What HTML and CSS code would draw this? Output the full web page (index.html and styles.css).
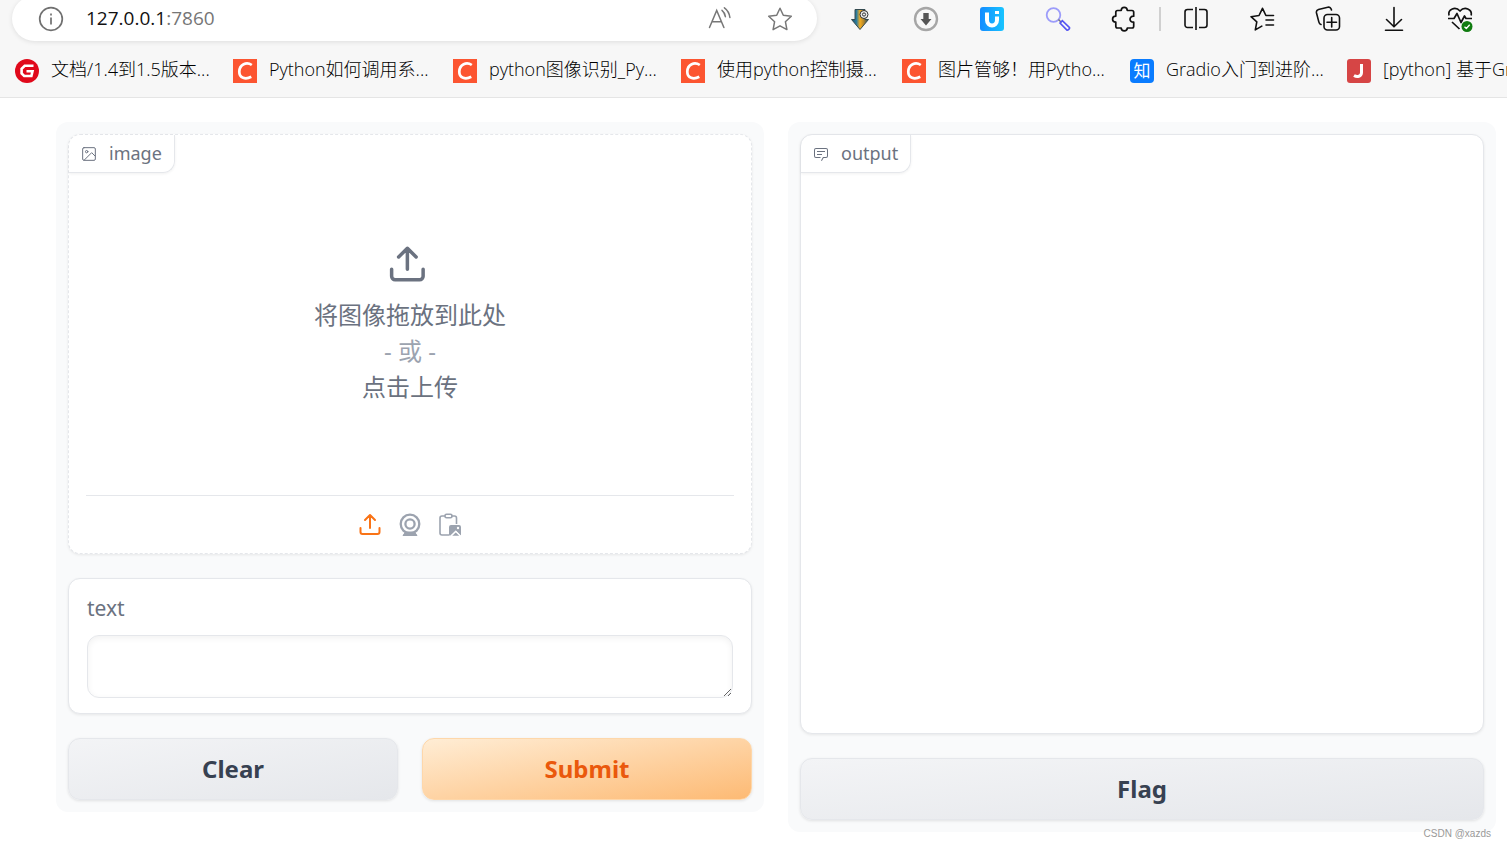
FILE: index.html
```html
<!DOCTYPE html>
<html lang="zh-CN">
<head>
<meta charset="UTF-8">
<meta name="viewport" content="width=device-width, initial-scale=1.0">
<title>Gradio</title>
<link rel="stylesheet" href="styles.css">
</head>
<body>
    <header class="browser">
        <div class="toolbar">
            <div class="address">
                <button class="icon-btn" aria-label="Site info">
                    <svg width="26" height="26" viewBox="0 0 26 26" fill="none" stroke="#707070" stroke-width="1.7"><circle cx="13" cy="13" r="11.3"/><path d="M13 11.5v7"/><path d="M13 7.4v2"/></svg>
                </button>
                <div class="url">127.0.0.1<span>:7860</span></div>
                <button class="icon-btn" aria-label="Read aloud">
                    <svg width="26" height="26" viewBox="0 0 26 26" fill="none" stroke="#777" stroke-width="1.5" stroke-linecap="round"><path d="M2.5 21.5L9.7 4.5l7.2 17M5 15.8h9.4"/><path d="M15 4.3c1.9 1.5 3 3.7 3.4 6.4M17.4 1.8c3 2.2 5 5.400 5.500 9.700"/></svg>
                </button>
                <button class="icon-btn star" aria-label="Add to favorites">
                    <svg width="26" height="26" viewBox="0 0 26 26" fill="none" stroke="#777" stroke-width="1.5" stroke-linejoin="round"><path d="M13 2.200l3.300 7 8 1-5.900 5.500 1.500 7.900-6.900-3.800-6.900 3.800 1.500-7.900-5.900-5.500 8-1z"/></svg>
                </button>
            </div>
            <div class="tools">
                <button class="tool" aria-label="Downloader">
                    <svg width="24" height="24" viewBox="0 0 24 24">
                        <defs><linearGradient id="dl"><stop offset="0" stop-color="#174b68"/><stop offset=".3" stop-color="#2f7f9e"/><stop offset=".5" stop-color="#f5ad20"/><stop offset=".7" stop-color="#b98a2a"/><stop offset="1" stop-color="#174b68"/></linearGradient></defs>
                        <path d="M7 2.500h10v10h3.500L12 22.500 3.500 12.500H7z" fill="url(#dl)" stroke="#354b50"/>
                        <circle cx="16" cy="7.500" r="4" fill="#eee" stroke="#333"/><circle cx="16" cy="7.500" r="1.600" fill="none" stroke="#333"/>
                    </svg>
                </button>
                <button class="tool" aria-label="Download manager">
                    <svg width="26" height="26" viewBox="0 0 26 26"><circle cx="13" cy="13" r="11" fill="none" stroke="#a6a6a6" stroke-width="2.400"/><path d="M10.300 7h5.400v6h2.800L13 19.500 7.500 13h2.800z" fill="#555"/></svg>
                </button>
                <button class="tool" aria-label="Ui">
                    <svg width="24" height="24" viewBox="0 0 24 24">
                        <defs><linearGradient id="ui" x1="0" x2="1"><stop offset="0" stop-color="#148cff"/><stop offset="1" stop-color="#18c4ff"/></linearGradient></defs>
                        <rect width="24" height="24" rx="3" fill="url(#ui)"/><path d="M7 5.500v7.500c0 7.300 10 7.300 10 0V9.500" fill="none" stroke="#fff" stroke-width="4"/><path d="M15 5.500h4" stroke="#fff" stroke-width="3"/>
                    </svg>
                </button>
                <button class="tool" aria-label="Search">
                    <svg width="26" height="26" viewBox="0 0 26 26" fill="none"><circle cx="8.500" cy="9" r="6.800" stroke="#9c9cfa" stroke-width="1.800"/><path d="M13.500 13.500l3 3" stroke="#777" stroke-width="1.500"/><path d="M15 17l2.300-2.300 7 6.600c1 1-1.600 3.600-2.600 2.600z" stroke="#5555f2" stroke-width="1.600"/></svg>
                </button>
                <button class="tool" aria-label="Extensions">
                    <svg width="26" height="26" viewBox="0 0 26 26" fill="none" stroke="#111" stroke-width="1.700" stroke-linejoin="round"><path d="M6.500 4.500h3.700c.2-4.200 5.900-4.200 6.100 0h4.700c1 0 1.700.7 1.700 1.700v4c-4.900-.3-4.900 6.300 0 6v4.100c0 1-.7 1.700-1.700 1.700h-4.700c-.2 3.900-5.900 3.900-6.100 0H6.500c-1 0-1.700-.7-1.700-1.700v-4.100c-4.300-.2-4.300-5.800 0-6V6.200c0-1 .7-1.700 1.700-1.700z"/></svg>
                </button>
                <span class="separator"></span>
                <button class="tool" aria-label="Split screen">
                    <svg width="26" height="26" viewBox="0 0 26 26" fill="none" stroke="#111" stroke-width="1.600"><path d="M10 3.500H4.500a2.500 2.500 0 0 0-2.500 2.500v13a2.500 2.500 0 0 0 2.500 2.500H10M16 3.500h5.500A2.500 2.500 0 0 1 24 6v13a2.500 2.500 0 0 1-2.500 2.500H16M13 1v23"/></svg>
                </button>
                <button class="tool" aria-label="Favorites">
                    <svg width="26" height="26" viewBox="0 0 26 26" fill="none" stroke="#111" stroke-width="1.600" stroke-linejoin="round" stroke-linecap="round"><path d="M24.500 9.500h-7.600L13.500 2.300 10 9.500l-8 1.200 5.800 5.200-1.500 8 6.500-3.800M17 14h7.500M17 19h7.500"/></svg>
                </button>
                <button class="tool" aria-label="Collections">
                    <svg width="26" height="26" viewBox="0 0 26 26" fill="none" stroke="#111" stroke-width="1.600" stroke-linecap="round"><rect x="9" y="8.500" width="15.500" height="15.500" rx="3.500"/><path d="M16.700 11.500v9.500M12 16.300h9.500M6 18.500c-1.300-.4-1.800-1.200-2.100-2.400L1.500 7c-.4-1.700.4-3 2-3.500l9.300-2.300c1.700-.4 3.200.6 3.700 2.800"/></svg>
                </button>
                <button class="tool" aria-label="Downloads">
                    <svg width="26" height="26" viewBox="0 0 26 26" fill="none" stroke="#111" stroke-width="1.600" stroke-linecap="round" stroke-linejoin="round"><path d="M13 1.500v19M5.500 13.500l7.500 7.300 7.500-7.300M4.500 24.300h17"/></svg>
                </button>
                <button class="tool" aria-label="Browser essentials">
                    <svg width="28" height="28" viewBox="0 0 28 28" fill="none" stroke="#111" stroke-width="1.700" stroke-linejoin="round"><path d="M3 10.500C1.500 4 9.500 1 14 6c4.500-5 12.500-2 11.200 4.500M2 13.500h6l3-5 4 9 3.500-6.500 1.500 2.500h6M6 17l7.500 7"/><circle cx="21" cy="21.500" r="5.500" fill="#107c10" stroke="none"/><path d="M18.500 21.700l1.800 1.800 3.400-3.700" stroke="#fff" stroke-width="1.300"/></svg>
                </button>
            </div>
        </div>
        <nav class="bookmarks">
            <a href="#">
                <svg width="24" height="24" viewBox="0 0 24 24"><circle cx="12" cy="12" r="12" fill="#e0091b"/><path d="M18.500 6.800H9.700L6.600 9.900v4.500l2.600 2.600h7.200l1.100-4.800h-6" fill="none" stroke="#fff" stroke-width="2.600"/></svg>
                <span>文档/1.4到1.5版本...</span>
            </a>
            <a href="#"><svg class="csdn"><use href="#csdn"/></svg><span>Python如何调用系...</span></a>
            <a href="#"><svg class="csdn"><use href="#csdn"/></svg><span>python图像识别_Py...</span></a>
            <a href="#"><svg class="csdn"><use href="#csdn"/></svg><span>使用python控制摄...</span></a>
            <a href="#"><svg class="csdn"><use href="#csdn"/></svg><span>图片管够！用Pytho...</span></a>
            <a href="#"><b class="favicon zhihu">知</b><span>Gradio入门到进阶...</span></a>
            <a href="#">
                <svg width="24" height="24" viewBox="0 0 24 24"><rect width="24" height="24" rx="3" fill="#d64545"/><path d="M14.500 5v8.500c0 4.200-4.500 4.800-7.500 3" fill="none" stroke="#fff" stroke-width="3"/></svg>
                <span>[python] 基于Gr</span>
            </a>
        </nav>
    </header>

    <main class="app">
        <section class="panel">
            <div class="block image-block">
                <div class="block-label">
                    <svg width="16" height="16" viewBox="0 0 24 24" fill="none" stroke="currentColor" stroke-width="1.500" stroke-linecap="round" stroke-linejoin="round"><rect x="2.500" y="2.500" width="19" height="19" rx="2"/><circle cx="8.500" cy="8.500" r="1.800"/><path d="M21 15l-5-5L5 21"/></svg>
                    <span>image</span>
                </div>
                <button class="dropzone">
                    <svg width="48" height="42" viewBox="0 0 27 24" fill="none" stroke="currentColor" stroke-width="2" stroke-linecap="round" stroke-linejoin="round"><path d="M21 15v4a2 2 0 0 1-2 2H5a2 2 0 0 1-2-2v-4M17 8l-5-5-5 5M12 3v12"/></svg>
                    <span>将图像拖放到此处</span>
                    <span class="or">- 或 -</span>
                    <span>点击上传</span>
                </button>
                <div class="sources">
                    <button class="source active" aria-label="Upload">
                        <svg width="24" height="24" viewBox="0 0 24 24" fill="none" stroke="currentColor" stroke-width="2" stroke-linecap="round" stroke-linejoin="round"><path d="M21.500 15v4a2 2 0 0 1-2 2h-15a2 2 0 0 1-2-2v-4M17 7l-5-5-5 5M12 2v13"/></svg>
                    </button>
                    <button class="source" aria-label="Webcam">
                        <svg width="24" height="24" viewBox="0 0 24 24" fill="none" stroke="currentColor" stroke-width="2.300"><circle cx="12" cy="11" r="9.300"/><circle cx="12" cy="11" r="4.600"/><path d="M5 22.500h14l-2.500-3.500h-9z" fill="currentColor" stroke-width="1"/></svg>
                    </button>
                    <button class="source" aria-label="Paste">
                        <svg width="24" height="24" viewBox="0 0 24 24" fill="none" stroke="currentColor" stroke-width="1.600"><path d="M7 3H4a2 2 0 0 0-2 2v15a2 2 0 0 0 2 2h7M13 3h3.500a2 2 0 0 1 2 2v6"/><rect x="7" y="1.200" width="7" height="3.500" rx="1.500"/><path d="M13 12h8a2 2 0 0 1 2 2v9l-5.200-5.600L12 23l-1-1v-8a2 2 0 0 1 2-2z" fill="currentColor" stroke="none"/><path d="M12.500 23.500l5.300-5 5.200 5z" fill="currentColor" stroke="#fff" stroke-width="1.300"/><circle cx="20" cy="15" r="1.200" fill="#fff" stroke="none"/></svg>
                    </button>
                </div>
            </div>
            <div class="block text-block">
                <label for="text">text</label>
                <textarea id="text" rows="1"></textarea>
            </div>
            <div class="actions">
                <button class="btn">Clear</button>
                <button class="btn primary">Submit</button>
            </div>
        </section>
        <section class="panel">
            <div class="block output-block">
                <div class="block-label">
                    <svg width="16" height="16" viewBox="0 0 32 32" fill="currentColor"><path d="M17.740 30 16 29l4-7h6a2 2 0 0 0 2-2V8a2 2 0 0 0-2-2H6a2 2 0 0 0-2 2v12a2 2 0 0 0 2 2h9v2H6a4 4 0 0 1-4-4V8a4 4 0 0 1 4-4h20a4 4 0 0 1 4 4v12a4 4 0 0 1-4 4h-4.840Z"/><path d="M8 10h16v2H8zM8 16h10v2H8z"/></svg>
                    <span>output</span>
                </div>
            </div>
            <button class="btn">Flag</button>
        </section>
    </main>
    <div class="watermark">CSDN @xazds</div>

    <svg class="symbols" aria-hidden="true">
        <symbol id="csdn" viewBox="0 0 24 24"><path d="M0 0h24v24H0z" fill="#fc5531"/><path d="M18.800 6C13.500 2.300 6.500 5.300 6.300 12.500c-.2 6.800 6.300 8.300 12 5.300" fill="none" stroke="#fff" stroke-width="2.700"/></symbol>
    </svg>
</body>
</html>
```
FILE: styles.css
```css
* {
    box-sizing: border-box;
}
body {
    margin: 0;
    min-height: 100vh;
    position: relative;
    overflow: hidden;
    background-color: #fff;
    font-family: "Noto Sans", "Noto Sans CJK SC", sans-serif;
}
button {
    border: none;
    padding: 0;
    background: none;
    font-family: inherit;
    cursor: pointer;
}
svg {
    display: block;
    flex-shrink: 0;
}
.symbols {
    display: none;
}

/* browser bar */
.browser {
    height: 98px;
    background-color: #f7f7f7;
    border-bottom: 1px solid #e5e5e5;
    overflow: hidden;
    font-family: "Open Sans", "Noto Sans CJK SC", sans-serif;
}
.toolbar {
    display: flex;
    gap: 10px;
    height: 45px;
    margin-top: -4px;
    padding: 0 14px 0 12px;
}
.address {
    flex: 1;
    display: flex;
    align-items: center;
    height: 45px;
    padding: 0 24px 0 26px;
    border-radius: 23px;
    background-color: #fff;
    box-shadow: 0 1px 5px rgba(0, 0, 0, 0.1);
}
.url {
    flex: 1;
    margin-left: 22px;
    padding-bottom: 2px;
    font-size: 19px;
    color: #111;
}
.url span {
    color: #767676;
}
.star {
    margin-left: 34px;
}
.tools {
    display: flex;
    align-items: center;
}
.tool {
    width: 66px;
    display: flex;
    justify-content: center;
}
.separator {
    width: 2px;
    height: 24px;
    margin: 0 2px;
    background-color: #d0d0d0;
}
.bookmarks {
    display: grid;
    grid-template-columns: 218px 220px 228px 221px 228px 217px 220px;
    padding: 15px 0 0 15px;
}
.bookmarks a {
    display: flex;
    align-items: center;
    gap: 12px;
    height: 30px;
    color: #000;
    font-size: 18px;
    font-weight: 300;
    line-height: 26px;
    text-decoration: none;
    white-space: nowrap;
}
.bookmarks span {
    padding-bottom: 4px;
}
.csdn, .favicon {
    width: 24px;
    height: 24px;
}
.zhihu {
    border-radius: 4px;
    background-color: #0a7cff;
    color: #fff;
    font-size: 17px;
    line-height: 24px;
    text-align: center;
}

/* app */
.app {
    display: grid;
    grid-template-columns: 1fr 1fr;
    align-items: start;
    gap: 24px;
    padding: 24px 11px 15px 56px;
}
.panel {
    display: flex;
    flex-direction: column;
    gap: 24px;
    padding: 12px;
    border-radius: 12px;
    background-color: #f9fafb;
}
.block {
    border: 1px solid #e5e7eb;
    border-radius: 12px;
    background-color: #fff;
    box-shadow: 0 1px 3px rgba(0, 0, 0, 0.08);
}
.block-label {
    align-self: flex-start;
    display: inline-flex;
    align-items: center;
    gap: 12px;
    height: 38px;
    padding: 0 12px;
    border-right: 1px solid #e5e7eb;
    border-bottom: 1px solid #e5e7eb;
    border-radius: 12px 0;
    box-shadow: 0 1px 3px rgba(0, 0, 0, 0.06);
    color: #6b7280;
    font-size: 18px;
}
.block-label span {
    padding-bottom: 2px;
}
.image-block {
    display: flex;
    flex-direction: column;
    height: 420px;
    border-style: dashed;
}
.dropzone {
    flex: 1;
    display: flex;
    flex-direction: column;
    align-items: center;
    justify-content: center;
    padding-bottom: 20px;
    color: #6b7280;
    font-size: 24px;
    line-height: 36px;
}
.dropzone svg {
    margin-bottom: 12px;
}
.or {
    color: #9ca3af;
}
.sources {
    display: flex;
    justify-content: center;
    align-items: center;
    gap: 16px;
    height: 58px;
    margin: 0 17px;
    border-top: 1px solid #e5e7eb;
}
.source {
    color: #9ca3af;
}
.source.active {
    color: #f97316;
}
.text-block {
    padding: 15px 18px;
}
.text-block label {
    display: block;
    margin-bottom: 12px;
    color: #6b7280;
    font-size: 21px;
    line-height: 29px;
}
.text-block textarea {
    display: block;
    width: 100%;
    height: 63px;
    padding: 15px;
    border: 1px solid #e5e7eb;
    border-radius: 12px;
    box-shadow: inset 0 2px 6px rgba(0, 0, 0, 0.06);
    font-family: inherit;
    font-size: 21px;
    resize: vertical;
    outline: none;
}
.output-block {
    height: 600px;
}
.actions {
    display: grid;
    grid-template-columns: 1fr 1fr;
    gap: 24px;
}
.btn {
    height: 62px;
    padding-bottom: 2px;
    border: 1px solid #e5e7eb;
    border-radius: 12px;
    background: linear-gradient(to bottom right, #f3f4f6, #e5e7eb);
    box-shadow: 0 1px 3px rgba(0, 0, 0, 0.1);
    color: #374151;
    font-size: 24px;
    font-weight: 700;
}
.btn.primary {
    border-color: #fed7aa;
    background: linear-gradient(to bottom right, #ffedd5, #fdba74);
    color: #ea580c;
}
.watermark {
    position: absolute;
    right: 16px;
    bottom: 8px;
    color: #999;
    font-family: "Liberation Sans", sans-serif;
    font-size: 10px;
}
```
